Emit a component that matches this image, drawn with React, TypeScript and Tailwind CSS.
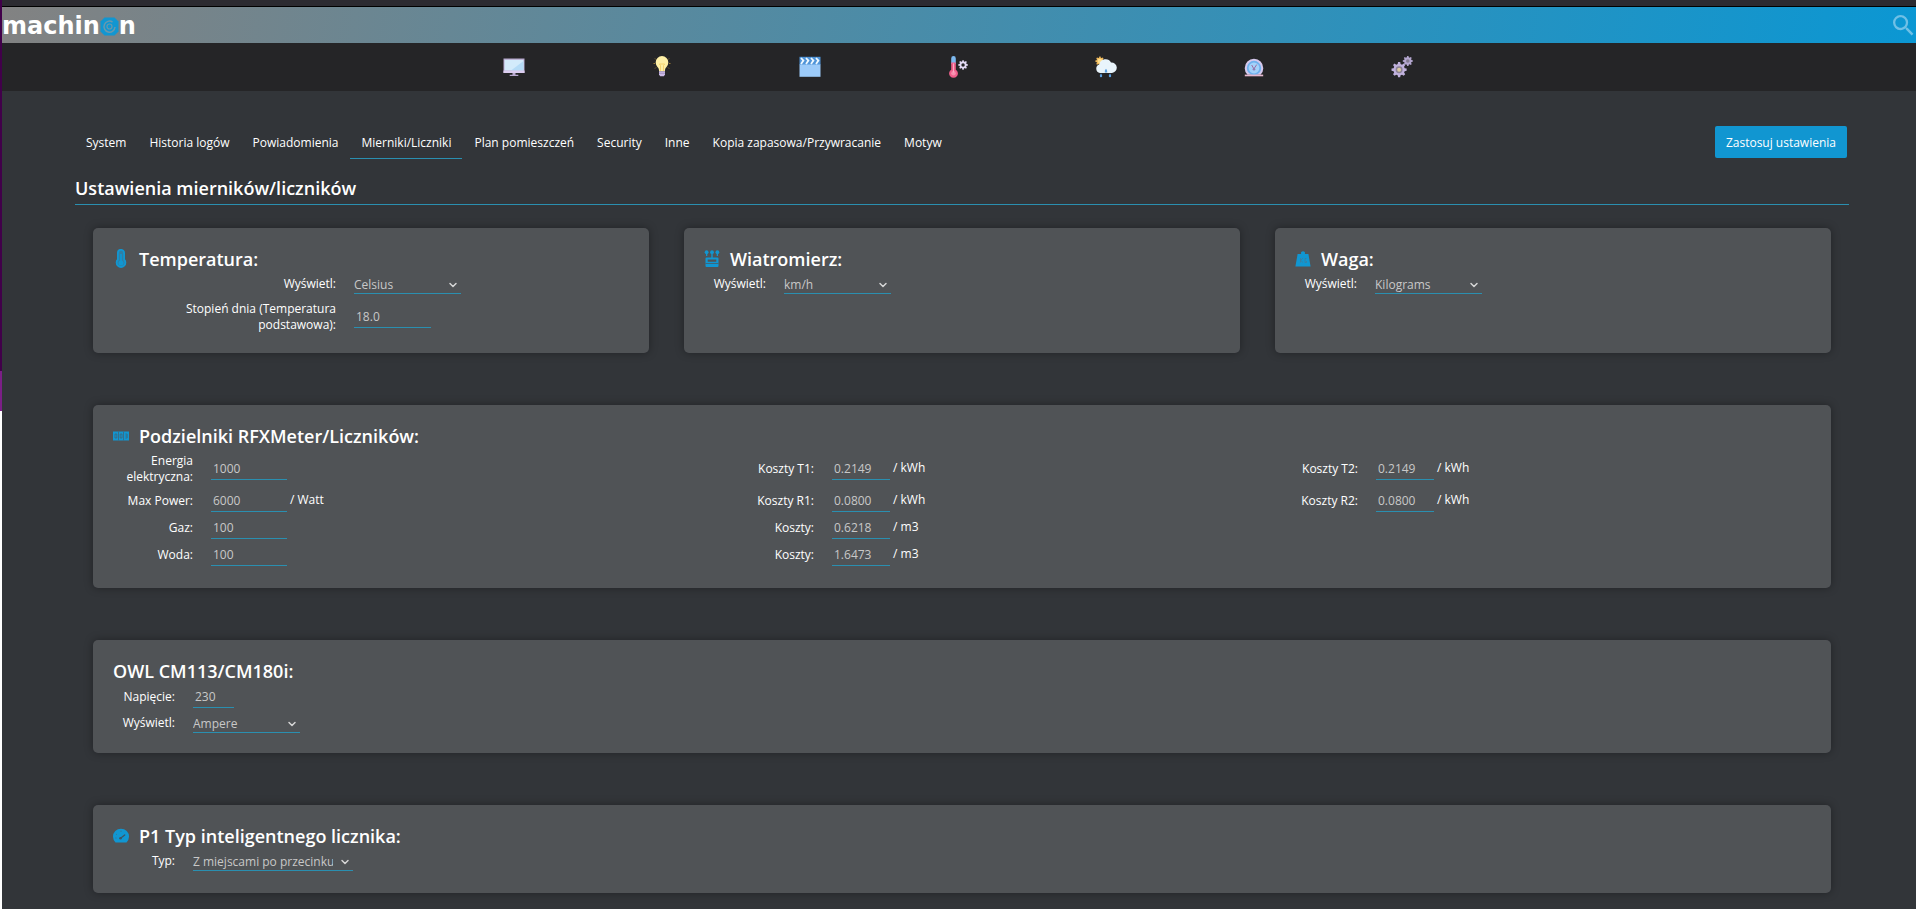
import type { ReactNode } from 'react'
import clsx from 'clsx'
import { ChevronDown } from 'lucide-react'

const TABS = [
  'System',
  'Historia logów',
  'Powiadomienia',
  'Mierniki/Liczniki',
  'Plan pomieszczeń',
  'Security',
  'Inne',
  'Kopia zapasowa/Przywracanie',
  'Motyw',
]
const ACTIVE_TAB = 'Mierniki/Liczniki'

type Cell = { id: string; label: string; value: string; unit?: string }

const DIVIDERS: Cell[][] = [
  [
    { id: 'energy', label: 'Energia elektryczna:', value: '1000' },
    { id: 'cost-t1', label: 'Koszty T1:', value: '0.2149', unit: '/ kWh' },
    { id: 'cost-t2', label: 'Koszty T2:', value: '0.2149', unit: '/ kWh' },
  ],
  [
    { id: 'max-power', label: 'Max Power:', value: '6000', unit: '/ Watt' },
    { id: 'cost-r1', label: 'Koszty R1:', value: '0.0800', unit: '/ kWh' },
    { id: 'cost-r2', label: 'Koszty R2:', value: '0.0800', unit: '/ kWh' },
  ],
  [
    { id: 'gas', label: 'Gaz:', value: '100' },
    { id: 'cost-gas', label: 'Koszty:', value: '0.6218', unit: '/ m3' },
  ],
  [
    { id: 'water', label: 'Woda:', value: '100' },
    { id: 'cost-water', label: 'Koszty:', value: '1.6473', unit: '/ m3' },
  ],
]

const GEAR =
  'M10.6 2h2.8l.5 2.6 1.9.8 2.2-1.5 2 2-1.5 2.2.8 1.9 2.6.5v2.9l-2.6.5-.8 1.9 1.5 2.2-2 2-2.2-1.5-1.9.8-.5 2.7h-2.8l-.5-2.7-1.9-.8L6 20l-2-2 1.5-2.2-.8-1.9L2 13.4v-2.9l2.7-.5.8-1.9L4 5.9l2-2 2.2 1.5 1.9-.8z'

function MonitorIcon() {
  return (
    <svg viewBox="0 0 22 22" className="size-[22px]" aria-hidden>
      <path fill="#b9a9cf" d="M.5 2.5h21V17H.5z" />
      <path fill="#d3ebfb" d="M1.5 3.8h19v10.7h-19z" />
      <path fill="#b5dbf6" d="M20.5 5v9.5H8z" />
      <path fill="#dccdf0" d="M.5 14.6h21V17H.5z" />
      <path fill="#b9a9cf" d="M9.5 17h3v1.8h2.8V20H6.7v-1.2h2.8z" />
    </svg>
  )
}

function BulbIcon() {
  return (
    <svg viewBox="0 0 22 22" className="size-[22px]" aria-hidden>
      <g stroke="#9a7a35" strokeWidth="1">
        <path d="M2.5 7.5H4M18 7.5h1.5M4 2.5l1 1M18 2.5l-1 1M4 12.5l1-1M18 12.5l-1-1" />
      </g>
      <path fill="#fff0a6" d="M11 0a6.3 6.3 0 0 0-6.3 6.4c0 2.6 1.6 4 2.6 5.7.6 1 .8 2.4.8 3.2h5.8c0-.8.2-2.2.8-3.2 1-1.7 2.6-3.1 2.6-5.7A6.3 6.3 0 0 0 11 0z" />
      <path fill="none" stroke="#f2cd63" strokeWidth=".8" d="M9.5 15V9.5L8.3 8h5.4l-1.2 1.5V15" />
      <path fill="#cbb9e6" d="M8 15.3h6v3.2l-1.2 1.7H9.2L8 18.5z" />
      <path fill="#8f7fae" d="M8 16.8h6v.7H8z" />
    </svg>
  )
}

function ClapperIcon() {
  return (
    <svg viewBox="0 0 22 22" className="size-[22px]" aria-hidden>
      <path fill="#4f94d8" d="M.5.8h21V9H.5z" />
      <path fill="#9ccbf9" d="M.5 8.5h21v12.3H.5z" />
      <path fill="none" stroke="#eef8ff" strokeWidth="1.8" d="M2 2l2.4 2.6L2 8M7 2l2.4 2.6L7 8M12 2l2.4 2.6L12 8M17 2l2.4 2.6L17 8" />
    </svg>
  )
}

function ThermoIcon() {
  return (
    <svg viewBox="0 0 22 22" className="size-[22px]" aria-hidden>
      <path fill="#7db9ef" d="M4.200 2.400a2.300 2.300 0 0 1 4.600 0V8H4.200z" />
      <path fill="#ef5f8b" d="M4.200 6.500h4.600v7.200a4.400 4.400 0 1 1-4.600 0z" />
      <circle cx="6.500" cy="17.300" r="2.300" fill="#f78fae" />
      <path stroke="#f9b3c8" strokeWidth=".9" d="M6.500 7.500v9" />
      <g transform="translate(10.300 3.200) scale(.48)">
        <path fill="#e3daf5" d={GEAR} />
        <circle cx="12" cy="12" r="3.600" fill="#252527" />
      </g>
    </svg>
  )
}

function WeatherIcon() {
  return (
    <svg viewBox="0 0 22 22" className="size-[22px]" aria-hidden>
      <g transform="translate(-.6 -.4) scale(.46)">
        <path fill="#efb95c" d={GEAR} />
        <circle cx="12" cy="12" r="5" fill="#ffdf8e" />
      </g>
      <path fill="#e9f4fb" d="M5 17a4.300 4.300 0 0 1-.6-8.400A6.200 6.200 0 0 1 16 6.500a4.800 4.800 0 0 1 1 10.500z" />
      <path fill="#c4dff1" d="M9.600 16.900c-.2-1.800 1-2.300 1.400-3.900.5 1.600 1.700 2.100 1.500 3.900z" />
      <g fill="#5b9fe0">
        <path d="M6 17.600c.9 1.200 1.200 1.700 1.200 2.400a1.200 1.200 0 0 1-2.400 0c0-.7.3-1.200 1.200-2.400zM15 17.600c.9 1.200 1.200 1.700 1.200 2.400a1.200 1.200 0 0 1-2.400 0c0-.7.3-1.200 1.200-2.400zM11 12.800c.8 1.200 1.200 1.700 1.200 2.500a1.200 1.200 0 0 1-2.400 0c0-.8.4-1.300 1.200-2.500z" />
      </g>
    </svg>
  )
}

function GaugeIcon() {
  return (
    <svg viewBox="0 0 22 22" className="size-[22px]" aria-hidden>
      <path fill="#d5c8ec" d="M4.500 18.800a9.300 9.300 0 1 1 13 0z" />
      <circle cx="11" cy="12" r="7.200" fill="#6fb2ee" />
      <circle cx="11" cy="12" r="5.400" fill="#a3d2fa" />
      <path fill="none" stroke="#a06a9e" strokeWidth="1" d="M8.700 9l2.200 3.900 2.800-4.300" />
      <circle cx="11" cy="13.200" r="1.300" fill="#8d7bb5" />
      <path fill="#e6b9cf" d="M1.800 18.600h18.400v1.700H1.800z" />
    </svg>
  )
}

function GearsIcon() {
  return (
    <svg viewBox="0 0 22 22" className="size-[22px]" aria-hidden>
      <g transform="translate(-1 4.600) scale(.76)">
        <path fill="#c0b1dd" d={GEAR} />
        <circle cx="12" cy="12" r="4.600" fill="#8c8296" />
        <circle cx="12" cy="12" r="2.600" fill="#d9c9a0" />
      </g>
      <g transform="translate(10.800 -1) scale(.5)">
        <path fill="#b3a6cf" d={GEAR} />
        <circle cx="12" cy="12" r="3.600" fill="#847b90" />
      </g>
    </svg>
  )
}

const NAV: { label: string; icon: ReactNode }[] = [
  { label: 'Panel', icon: <MonitorIcon /> },
  { label: 'Przełączniki', icon: <BulbIcon /> },
  { label: 'Sceny', icon: <ClapperIcon /> },
  { label: 'Temperatura', icon: <ThermoIcon /> },
  { label: 'Pogoda', icon: <WeatherIcon /> },
  { label: 'Pomiary', icon: <GaugeIcon /> },
  { label: 'Konfiguracja', icon: <GearsIcon /> },
]

function ThermometerGlyph() {
  return (
    <svg viewBox="0 0 16 20" className="h-5 w-4" aria-hidden>
      <path fill="#2f7fa5" stroke="#1196d1" strokeWidth="1.800" d="M4.900 3.900a3.100 3.100 0 0 1 6.200 0v6.600a4.400 4.400 0 1 1-6.200 0z" />
      <path stroke="#1196d1" strokeWidth="1.800" d="M8 5v9" />
      <circle cx="8" cy="14" r="2.500" fill="#1196d1" />
    </svg>
  )
}

function WindGlyph() {
  return (
    <svg viewBox="0 0 16 20" className="h-5 w-4" aria-hidden>
      <g fill="#1196d1">
        <circle cx="2.600" cy="3.200" r="1.900" />
        <circle cx="8" cy="3.200" r="1.900" />
        <circle cx="13.400" cy="3.200" r="1.900" />
        <path d="M2 4h1.300v3H2zM7.300 4h1.400v5H7.300zM12.700 4H14v3h-1.300z" />
        <path fillRule="evenodd" d="M2.500 8.500h11a1 1 0 0 1 1 1V17a1 1 0 0 1-1 1h-11a1 1 0 0 1-1-1V9.500a1 1 0 0 1 1-1zm1.200 2v2.200h8.600v-2.200z" />
      </g>
      <path stroke="#505356" strokeWidth=".7" d="M1.500 14.500h13" />
    </svg>
  )
}

function WeightGlyph() {
  return (
    <svg viewBox="0 0 16 20" className="h-5 w-4" aria-hidden>
      <path fill="#1196d1" d="M6.200 5a2 2 0 1 1 3.600 0h3.600L15.600 17.500H.4L2.600 5z" />
      <path fill="none" stroke="#3a7fa0" strokeWidth=".9" d="M5.500 9v4.500M8 9l-2.300 2.300L8 13.500M11.500 9.500H10v4h1.500V12" />
    </svg>
  )
}

function CounterGlyph() {
  return (
    <svg viewBox="0 0 16 20" className="h-5 w-4" aria-hidden>
      <path fill="#1196d1" d="M0 5.500h16v9H0z" />
      <g fill="none" stroke="#3f6478" strokeWidth=".8">
        <path d="M5.500 5.500v9M10.500 5.500v9" />
        <path d="M2 8h1.800v4H2zM7.200 8H9v4H7.200zM12.400 8h1.700v4h-1.700M12.400 10h1.700" />
      </g>
    </svg>
  )
}

function DialGlyph() {
  return (
    <svg viewBox="0 0 16 20" className="h-5 w-4" aria-hidden>
      <path fill="#1196d1" d="M2.500 16.500A8 8 0 1 1 13.500 16.500z" />
      <path stroke="#3d5666" strokeWidth="1.300" strokeLinecap="round" d="M7.500 12.300l4.200-3.300" />
      <circle cx="7.500" cy="12.300" r="1.300" fill="#3d5666" />
      <path stroke="#3d6f88" strokeWidth=".8" d="M8 4.500V6M3 8l1 .8M2.300 12h1.300" />
    </svg>
  )
}

function Logo() {
  return (
    <a href="#" aria-label="machinOn" className="flex items-center pt-[2px] font-['DejaVu_Sans',sans-serif] text-2xl leading-6 font-bold text-white">
      machin
      <svg viewBox="0 0 19 19" className="size-[19px]" aria-hidden>
        <path fill="#1196d1" d="M4.500.5h10l4 4v10l-4 4h-10l-4-4v-10z" />
        <path fill="none" stroke="#6a98ad" strokeWidth="1.500" d="M12.500 5A5.500 5.500 0 1 0 15 10" />
        <circle cx="9.500" cy="9.500" r="2.500" fill="#1196d1" stroke="#6a98ad" strokeWidth="1.200" />
      </svg>
      n
    </a>
  )
}

function Card({ title, icon, className, children }: { title: string; icon?: ReactNode; className?: string; children: ReactNode }) {
  return (
    <section className={clsx('rounded-[5px] bg-[#505356] px-5 pt-5 shadow-[0_0_8px_rgba(0,0,0,0.35)]', className)}>
      <h2 className="flex h-[22px] items-center gap-[10px] text-lg font-semibold">
        {icon}
        {title}
      </h2>
      <div className="mt-1 flex flex-col gap-[5px]">{children}</div>
    </section>
  )
}

function Field({ id, label, labelWidth = 'w-[62px]', children }: { id: string; label: string; labelWidth?: string; children: ReactNode }) {
  return (
    <div className="flex items-center">
      <label htmlFor={id} className={clsx('mr-[18px] shrink-0 text-right', labelWidth)}>{label}</label>
      {children}
    </div>
  )
}

function TextInput({ id, value, width }: { id: string; value: string; width: string }) {
  return (
    <input
      id={id}
      type="text"
      defaultValue={value}
      className={clsx('h-[22px] border-b border-[#2a8fb0] bg-transparent px-[2px] text-[#c8c8c8] outline-none', width)}
    />
  )
}

function Select({ id, value, width = 'w-[107px]' }: { id: string; value: string; width?: string }) {
  return (
    <div className={clsx('relative', width)}>
      <select id={id} defaultValue={value} className="block h-5 w-full appearance-none border-b border-[#2a8fb0] bg-transparent pt-[2px] pr-5 text-[#c8c8c8] outline-none">
        <option>{value}</option>
      </select>
      <ChevronDown className="pointer-events-none absolute top-[5px] right-[2px] size-3 text-[#d5d5d5]" strokeWidth={3} aria-hidden />
    </div>
  )
}

export default function App() {
  return (
    <div className="flex min-h-screen bg-[#323539] font-['Open_Sans','Noto_Sans',sans-serif] text-xs text-white">
      <div className="flex w-[2px] flex-col bg-white" aria-hidden>
        <div className="h-[371px] bg-[#41004a]" />
        <div className="h-10 bg-[#7b1f86]" />
      </div>

      <div className="min-w-0 flex-1">
        <div className="h-[7px] border-b border-black bg-[#2c2b31]" />
        <header className="flex h-9 items-center justify-between bg-[linear-gradient(100deg,#828282,#0b97d3)]">
          <Logo />
          <button type="button" aria-label="Szukaj" className="mr-[2px] text-[#6fc0e6]">
            <svg viewBox="3 3 18 18" className="size-[21px]" fill="currentColor" aria-hidden>
              <path d="M15.500 14h-.79l-.28-.27A6.471 6.471 0 0 0 16 9.500 6.500 6.500 0 1 0 9.500 16c1.610 0 3.090-.59 4.230-1.570l.27.28v.79l5 4.990L20.490 19l-4.990-5zm-6 0C7.010 14 5 11.990 5 9.500S7.010 5 9.500 5 14 7.010 14 9.500 11.990 14 9.500 14z" />
            </svg>
          </button>
        </header>

        <nav className="flex h-12 items-center justify-center bg-[#252527] pr-[2px]" aria-label="Menu">
          {NAV.map((item) => (
            <a key={item.label} href="#" aria-label={item.label} className="flex w-[148px] justify-center">
              {item.icon}
            </a>
          ))}
        </nav>

        <main className="pt-[35px] pr-[67px] pb-4 pl-[73px]">
          <div className="flex items-start justify-between pr-[2px]">
            <ul className="flex gap-px">
              {TABS.map((tab) => (
                <li key={tab}>
                  <a
                    href="#"
                    className={clsx('block border-b px-[11px] pt-2 pb-[7px] leading-[17px]', tab === ACTIVE_TAB ? 'border-[#2a8fb0]' : 'border-transparent')}
                  >
                    {tab}
                  </a>
                </li>
              ))}
            </ul>
            <button type="button" className="h-8 rounded-xs bg-[#1196d1] px-[11px] pt-[2px]">Zastosuj ustawienia</button>
          </div>

          <h1 className="mt-4 border-b border-[#2a8fb0] pb-[3px] text-lg leading-[26px] font-semibold">Ustawienia mierników/liczników</h1>

          <div className="mt-[23px] flex flex-col gap-[52px] px-[18px]">
            <div className="grid grid-cols-3 gap-[35px]">
              <Card title="Temperatura:" icon={<ThermometerGlyph />} className="pb-5">
                <Field id="temp-unit" label="Wyświetl:" labelWidth="w-[223px]">
                  <Select id="temp-unit" value="Celsius" />
                </Field>
                <div className="pt-[2px]">
                  <Field id="degree-days" label="Stopień dnia (Temperatura podstawowa):" labelWidth="w-[223px] pl-12">
                    <TextInput id="degree-days" value="18.0" width="w-[77px]" />
                  </Field>
                </div>
              </Card>
              <Card title="Wiatromierz:" icon={<WindGlyph />} className="pb-5">
                <Field id="wind-unit" label="Wyświetl:">
                  <Select id="wind-unit" value="km/h" />
                </Field>
              </Card>
              <Card title="Waga:" icon={<WeightGlyph />} className="pb-5">
                <Field id="weight-unit" label="Wyświetl:">
                  <Select id="weight-unit" value="Kilograms" />
                </Field>
              </Card>
            </div>

            <Card title="Podzielniki RFXMeter/Liczników:" icon={<CounterGlyph />} className="pb-[22px]">
              {DIVIDERS.map((row, i) => (
                <div key={row[0].id} className={clsx('grid grid-cols-[621fr_544fr_533fr] items-center', i === 0 && 'pt-[2px]')}>
                  {row.map((cell, col) => (
                    <Field key={cell.id} id={cell.id} label={cell.label} labelWidth="w-20">
                      <TextInput id={cell.id} value={cell.value} width={col === 0 ? 'w-[76px]' : 'w-[58px]'} />
                      {cell.unit && <span className="ml-[3px] pb-[3px]">{cell.unit}</span>}
                    </Field>
                  ))}
                </div>
              ))}
            </Card>

            <Card title="OWL CM113/CM180i:" className="pb-5">
              <Field id="voltage" label="Napięcie:">
                <TextInput id="voltage" value="230" width="w-[41px]" />
              </Field>
              <Field id="owl-unit" label="Wyświetl:">
                <Select id="owl-unit" value="Ampere" />
              </Field>
            </Card>

            <Card title="P1 Typ inteligentnego licznika:" icon={<DialGlyph />} className="pb-[22px]">
              <Field id="meter-type" label="Typ:">
                <Select id="meter-type" value="Z miejscami po przecinku" width="w-[160px]" />
              </Field>
            </Card>
          </div>
        </main>
      </div>
    </div>
  )
}
